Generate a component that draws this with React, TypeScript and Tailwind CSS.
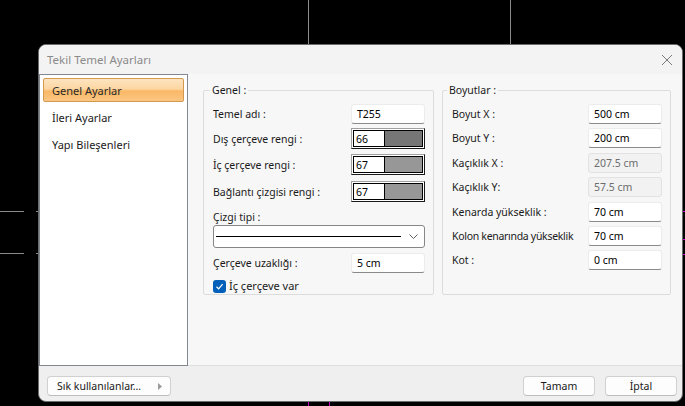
import React from "react";

function Field({ value, disabled }: { value: string; disabled?: boolean }) {
  return disabled ? (
    <div className="h-[20px] w-[74px] flex items-center pl-[5px] rounded-[3px] border border-[#e2e2e2] bg-[#f2f2f2] text-[#6d6d6d]">
      {value}
    </div>
  ) : (
    <div className="h-[20px] w-[74px] flex items-center pl-[5px] rounded-[3px] border border-[#ececec] border-b-[#8a8a8a] bg-white text-black">
      {value}
    </div>
  );
}

function ColorPick({ value, swatch }: { value: string; swatch: string }) {
  return (
    <div className="h-[21px] w-[74px] border-t border-l border-[#a0a0a0] border-r border-b border-r-[#1a1a1a] border-b-[#1a1a1a] p-[1px] bg-white">
      <div className="h-full w-full border border-black flex">
        <div className="w-[30px] flex items-center pl-[2px] bg-white text-black">{value}</div>
        <div className="flex-1 border-l border-black" style={{ backgroundColor: swatch }} />
      </div>
    </div>
  );
}

function Row({ label, children, tight }: { label: string; children: React.ReactNode; tight?: boolean }) {
  return (
    <div className="flex items-center justify-between">
      <span className={tight ? "text-[#1a1a1a] tracking-[-0.3px]" : "text-[#1a1a1a]"}>{label}</span>
      {children}
    </div>
  );
}

export default function App() {
  return (
    <div className="relative w-[685px] h-[406px] bg-black overflow-hidden font-['Noto_Sans',sans-serif] text-[10.5px] leading-[14px] pl-[38px] pt-[44px]">
      {/* background drawing lines */}
      <div className="absolute left-[308px] top-0 w-px h-[44px] bg-[#8a8a8a]" />
      <div className="absolute left-[510px] top-0 w-px h-[44px] bg-[#8a8a8a]" />
      <div className="absolute left-0 top-[211px] w-[24px] h-px bg-[#8a8a8a]" />
      <div className="absolute left-0 top-[253px] w-[24px] h-px bg-[#8a8a8a]" />
      <div className="absolute left-[36px] top-[211px] w-[2px] h-px bg-[#8a8a8a]" />
      <div className="absolute left-[36px] top-[253px] w-[2px] h-px bg-[#8a8a8a]" />
      <div className="absolute left-[308px] top-[402px] w-px h-[4px] bg-[#c000c0]" />
      <div className="absolute left-[329px] top-[402px] w-px h-[4px] bg-[#c000c0]" />
      <div className="absolute left-[683px] top-[211px] w-[2px] h-px bg-[#c000c0]" />
      <div className="absolute left-[683px] top-[239px] w-[2px] h-px bg-[#c000c0]" />
      <div className="absolute left-[683px] top-[254px] w-[2px] h-px bg-[#c000c0]" />

      {/* dialog */}
      <div className="w-[645px] h-[358px] rounded-[8px] border border-[#6b6b6b] bg-[#efefef] overflow-hidden flex flex-col">
        {/* title bar */}
        <div className="h-[29px] shrink-0 bg-[#f3f3f3] flex items-center justify-between pl-[8px] pr-[9px]">
          <span className="text-[11.5px] text-[#8a8a8a]">Tekil Temel Ayarları</span>
          <svg width="12" height="12" viewBox="0 0 12 12">
            <path d="M1 1 L11 11 M11 1 L1 11" stroke="#7a7a7a" strokeWidth="1" fill="none" />
          </svg>
        </div>

        {/* body */}
        <div className="h-[292px] shrink-0 flex">
          {/* list */}
          <div className="w-[149px] shrink-0 bg-white border border-[#828790] pt-[3px] px-[3px] flex flex-col gap-[3px] text-[11px]">
            <div className="h-[24px] flex items-center pt-[1px] pl-[8px] rounded-[2px] border border-[#d39a4f] bg-[linear-gradient(to_bottom,#fde4c0_0%,#fcd6a2_45%,#f9b866_55%,#fbc683_100%)] text-[#2a2a2a]">
              Genel Ayarlar
            </div>
            <div className="h-[24px] flex items-center pt-[2px] pl-[9px] text-[#1a1a1a]">İleri Ayarlar</div>
            <div className="h-[24px] flex items-center pt-[2px] pl-[9px] text-[#1a1a1a]">Yapı Bileşenleri</div>
          </div>

          {/* content */}
          <div className="flex-1 bg-[#f7f7f7] border-b border-[#dedede] pl-[15px] pt-[9px] flex items-start">
            <fieldset className="w-[231px] h-[212px] border border-[#dcdcdc] rounded-[2px] pl-[9px] pr-[8px] pt-[7px] m-0">
              <legend className="-ml-[3px] px-[2px] text-[#1a1a1a]">Genel :</legend>
              <div className="flex flex-col">
                <Row label="Temel adı :">
                  <Field value="T255" />
                </Row>
                <div className="mt-[4px]">
                  <Row label="Dış çerçeve rengi :">
                    <ColorPick value="66" swatch="#767676" />
                  </Row>
                </div>
                <div className="mt-[5px]">
                  <Row label="İç çerçeve rengi :">
                    <ColorPick value="67" swatch="#979797" />
                  </Row>
                </div>
                <div className="mt-[6px]">
                  <Row label="Bağlantı çizgisi rengi :">
                    <ColorPick value="67" swatch="#979797" />
                  </Row>
                </div>
                <div className="mt-[8px] text-[#1a1a1a]">Çizgi tipi :</div>
                <div className="mt-[1px] h-[23px] rounded-[3px] border border-[#868686] bg-white flex items-center pl-[2px] pr-[6px]">
                  <div className="w-[185px] h-[1.5px] bg-black" />
                  <div className="flex-1" />
                  <svg width="9" height="5" viewBox="0 0 9 5">
                    <path d="M0.5 0.5 L4.5 4.5 L8.5 0.5" stroke="#606060" strokeWidth="1" fill="none" />
                  </svg>
                </div>
                <div className="mt-[5px]">
                  <Row label="Çerçeve uzaklığı :">
                    <Field value="5 cm" />
                  </Row>
                </div>
                <div className="mt-[6px] flex items-center gap-[3px]">
                  <div className="w-[13px] h-[13px] rounded-[3px] bg-[#005fb8] flex items-center justify-center">
                    <svg width="9" height="9" viewBox="0 0 9 9">
                      <path d="M1.5 4.8 L3.6 6.8 L7.6 2.2" stroke="white" strokeWidth="1.2" fill="none" />
                    </svg>
                  </div>
                  <span className="text-[11px] text-[#1a1a1a]">İç çerçeve var</span>
                </div>
              </div>
            </fieldset>

            <fieldset className="ml-[8px] w-[229px] h-[212px] border border-[#dcdcdc] rounded-[2px] pl-[9px] pr-[8px] pt-[7px] m-0">
              <legend className="-ml-[5px] px-[2px] text-[#1a1a1a]">Boyutlar :</legend>
              <div className="flex flex-col gap-[4.4px]">
                <Row label="Boyut X :">
                  <Field value="500 cm" />
                </Row>
                <Row label="Boyut Y :">
                  <Field value="200 cm" />
                </Row>
                <Row label="Kaçıklık X :">
                  <Field value="207.5 cm" disabled />
                </Row>
                <Row label="Kaçıklık Y:">
                  <Field value="57.5 cm" disabled />
                </Row>
                <Row label="Kenarda yükseklik :">
                  <Field value="70 cm" />
                </Row>
                <Row label="Kolon kenarında yükseklik" tight>
                  <Field value="70 cm" />
                </Row>
                <Row label="Kot :">
                  <Field value="0 cm" />
                </Row>
              </div>
            </fieldset>
          </div>
        </div>

        {/* bottom bar */}
        <div className="flex-1 flex items-start pt-[10px] pl-[8px] pr-[5px]">
          <div className="w-[124px] h-[20px] rounded-[4px] border border-[#d0d0d0] border-b-[#bdbdbd] bg-[#fdfdfd] flex items-center pl-[9px] pr-[8px] justify-between">
            <span className="text-[#1a1a1a]">Sık kullanılanlar…</span>
            <svg width="4" height="7" viewBox="0 0 4 7">
              <path d="M0 0 L4 3.5 L0 7 Z" fill="#9a9a9a" />
            </svg>
          </div>
          <div className="flex-1" />
          <div className="w-[72px] h-[20px] rounded-[4px] border border-[#d0d0d0] border-b-[#bdbdbd] bg-[#fdfdfd] flex items-center justify-center text-[#1a1a1a]">
            Tamam
          </div>
          <div className="ml-[10px] w-[72px] h-[20px] rounded-[4px] border border-[#d0d0d0] border-b-[#bdbdbd] bg-[#fdfdfd] flex items-center justify-center text-[#1a1a1a]">
            İptal
          </div>
        </div>
      </div>
    </div>
  );
}
